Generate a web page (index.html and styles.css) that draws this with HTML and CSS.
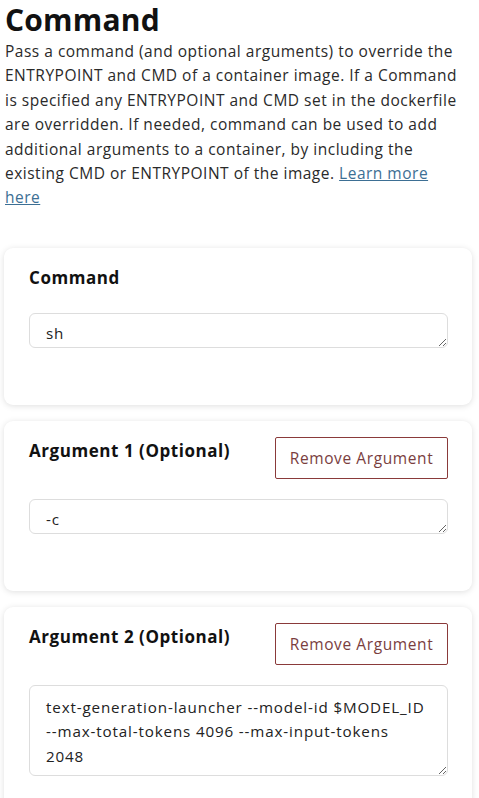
FILE: index.html
```html
<!DOCTYPE html>
<html>
<head>
<meta charset="utf-8">
<link rel="stylesheet" href="styles.css">
</head>
<body>
<div class="page">
  <h1 class="title">Command</h1>
  <p class="desc">Pass a command (and optional arguments) to override the<br>ENTRYPOINT and CMD of a container image. If a Command<br>is specified any ENTRYPOINT and CMD set in the dockerfile<br>are overridden. If needed, command can be used to add<br>additional arguments to a container, by including the<br>existing CMD or ENTRYPOINT of the image. <a class="link" href="#">Learn more<br>here</a></p>

  <div class="cards">
    <section class="card">
      <div class="card-head">
        <h2 class="card-title">Command</h2>
      </div>
      <textarea class="field" rows="1">sh</textarea>
    </section>

    <section class="card">
      <div class="card-head">
        <h2 class="card-title">Argument 1 (Optional)</h2>
        <button class="remove">Remove Argument</button>
      </div>
      <textarea class="field" rows="1">-c</textarea>
    </section>

    <section class="card">
      <div class="card-head">
        <h2 class="card-title">Argument 2 (Optional)</h2>
        <button class="remove">Remove Argument</button>
      </div>
      <textarea class="field tall" rows="3">text-generation-launcher --model-id $MODEL_ID --max-total-tokens 4096 --max-input-tokens 2048</textarea>
    </section>
  </div>
</div>
</body>
</html>
```
FILE: styles.css
```css
* { box-sizing: border-box; }
html, body { margin: 0; padding: 0; background: #fff; }
body {
  font-family: "Open Sans", "Liberation Sans", sans-serif;
  color: #222;
}
.page {
  padding: 0 7px 0 4px;
}
.title {
  margin: 0;
  padding-left: 1px;
  font-size: 30px;
  font-weight: 700;
  line-height: 39px;
  color: #111;
  letter-spacing: 0.2px;
}
.desc {
  margin: 0 -7px 0 0;
  padding-left: 1px;
  font-size: 15.5px;
  letter-spacing: 0.5px;
  line-height: 24.4px;
  color: #2a2a2a;
}
.link {
  color: #3d6f94;
  text-decoration: underline;
}
.cards {
  margin-top: 38px;
  display: flex;
  flex-direction: column;
  gap: 16px;
}
.card {
  background: #fff;
  border-radius: 9px;
  box-shadow: 0 1px 6px rgba(0,0,0,0.13);
  padding: 16px 24px 57px 25px;
}
.card-head {
  display: flex;
  justify-content: space-between;
  align-items: flex-start;
  margin-bottom: 20px;
}
.card-title {
  margin: 3px 0 0;
  padding-bottom: 4px;
  font-size: 17px;
  font-weight: 700;
  line-height: 22px;
  letter-spacing: 0.55px;
  color: #111;
}
.remove {
  font-family: inherit;
  font-size: 15.5px;
  letter-spacing: 0.6px;
  color: #7a3e3e;
  background: #fff;
  border: 1.5px solid #8a3a3a;
  border-radius: 2px;
  height: 42px;
  width: 173px;
  padding: 0;
  margin-top: 0;
}
.field {
  display: block;
  width: 100%;
  font-family: inherit;
  font-size: 15.2px;
  letter-spacing: 0.85px;
  line-height: 24.4px;
  color: #222;
  border: 1px solid #ddd;
  border-radius: 6px;
  padding: 7px 16px 0;
  height: 35px;
  resize: vertical;
  overflow: hidden;
}
.field.tall { height: 91px; padding-top: 9px; }
```
